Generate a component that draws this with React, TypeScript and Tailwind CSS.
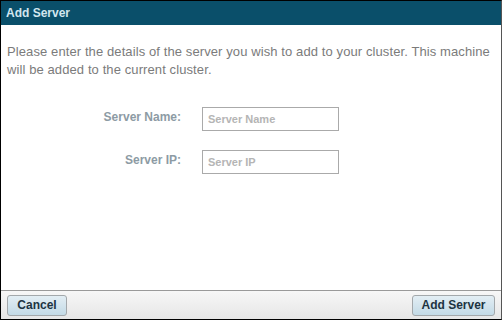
export default function App() {
  return (
    <div className="w-[502px] h-[320px] bg-white border border-black border-r-[#555] flex flex-col font-['Liberation_Sans',Arial,sans-serif]">
      {/* タイトルバー */}
      <div className="h-[24px] bg-[#0a4f6a] flex items-center px-[5px]">
        <span className="text-[12px] font-bold text-[#d2e6ef]">Add Server</span>
      </div>

      {/* 本文 */}
      <div className="flex-1 px-[6px] pt-[18px]">
        <p className="text-[13px] leading-[18px] text-[#7b7b7b] tracking-[0.1px]">
          Please enter the details of the server you wish to add to your cluster. This machine will be added to the current cluster.
        </p>

        <div className="mt-[28px] grid grid-cols-[175px_1fr] gap-x-[20px] gap-y-[19px] items-start">
          <label className="text-right text-[12px] leading-[14px] font-bold text-[#8d9ba4] pt-[3px] pr-[1px]">Server Name:</label>
          <input
            placeholder="Server Name"
            className="w-[137px] h-[24px] border border-[#aaaaaa] px-[5px] text-[11px] font-bold placeholder:text-[#b5b5b5] outline-none"
          />
          <label className="text-right text-[12px] leading-[14px] font-bold text-[#8d9ba4] pt-[3px] pr-[1px]">Server IP:</label>
          <input
            placeholder="Server IP"
            className="w-[137px] h-[24px] border border-[#aaaaaa] px-[5px] text-[11px] font-bold placeholder:text-[#b5b5b5] outline-none"
          />
        </div>
      </div>

      {/* フッター */}
      <div className="h-[29px] border-t border-[#9a9a9a] bg-gradient-to-b from-[#f7f7f7] to-[#e6e6e6] flex items-center justify-between px-[6px]">
        <button className="w-[60px] h-[21px] rounded-[3px] border border-[#a3a8ab] bg-gradient-to-b from-[#e3eef4] to-[#c3dae6] text-[12px] font-bold text-[#1d3442]">
          Cancel
        </button>
        <button className="w-[83px] h-[21px] rounded-[3px] border border-[#a3a8ab] bg-gradient-to-b from-[#e3eef4] to-[#c3dae6] text-[12px] font-bold text-[#1d3442]">
          Add Server
        </button>
      </div>
    </div>
  );
}
